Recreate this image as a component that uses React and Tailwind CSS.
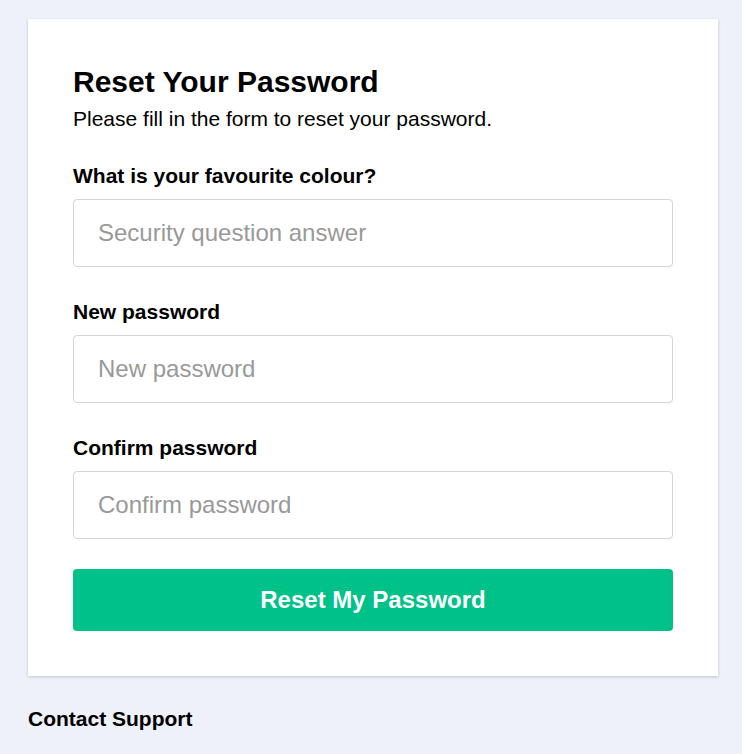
import { useState } from 'react';

const fields = [
    { id: 'answer', label: 'What is your favourite colour?', placeholder: 'Security question answer', type: 'text' },
    { id: 'password', label: 'New password', placeholder: 'New password', type: 'password' },
    { id: 'confirm', label: 'Confirm password', placeholder: 'Confirm password', type: 'password' },
];

export default function App() {
    const [values, setValues] = useState({ answer: '', password: '', confirm: '' });

    return (
        <div className="min-h-screen bg-[#eef1f9] pl-[28px] pr-[24px] pt-[19px] font-['Liberation_Sans',Arial,sans-serif] text-black">
            <form
                className="bg-white px-[45px] pt-[45px] pb-[45px] shadow-[0_1px_3px_rgba(0,0,0,0.2)]"
                onSubmit={(e) => e.preventDefault()}
            >
                <h1 className="text-[30px] leading-[36px] font-bold">Reset Your Password</h1>
                <p className="mt-[7px] text-[21px] leading-[24px]">Please fill in the form to reset your password.</p>

                <div className="mt-[33px] flex flex-col gap-[33px]">
                    {fields.map(f => (
                        <label key={f.id} className="block">
                            <span className="block text-[21px] leading-[24px] font-bold mb-[11px]">{f.label}</span>
                            <input
                                type={f.type}
                                value={values[f.id]}
                                onChange={(e) => setValues({ ...values, [f.id]: e.target.value })}
                                placeholder={f.placeholder}
                                className="block w-full h-[68px] rounded-[4px] border border-[#d4d4d4] px-[24px] text-[24px] text-black placeholder:text-[#999999] outline-none"
                            />
                        </label>
                    ))}
                </div>

                <button
                    type="submit"
                    className="mt-[30px] w-full h-[62px] rounded-[4px] bg-[#00c187] text-white text-[24px] font-bold"
                >
                    Reset My Password
                </button>
            </form>

            <div className="mt-[31px] text-[21px] leading-[24px] font-bold">Contact Support</div>
        </div>
    );
}
